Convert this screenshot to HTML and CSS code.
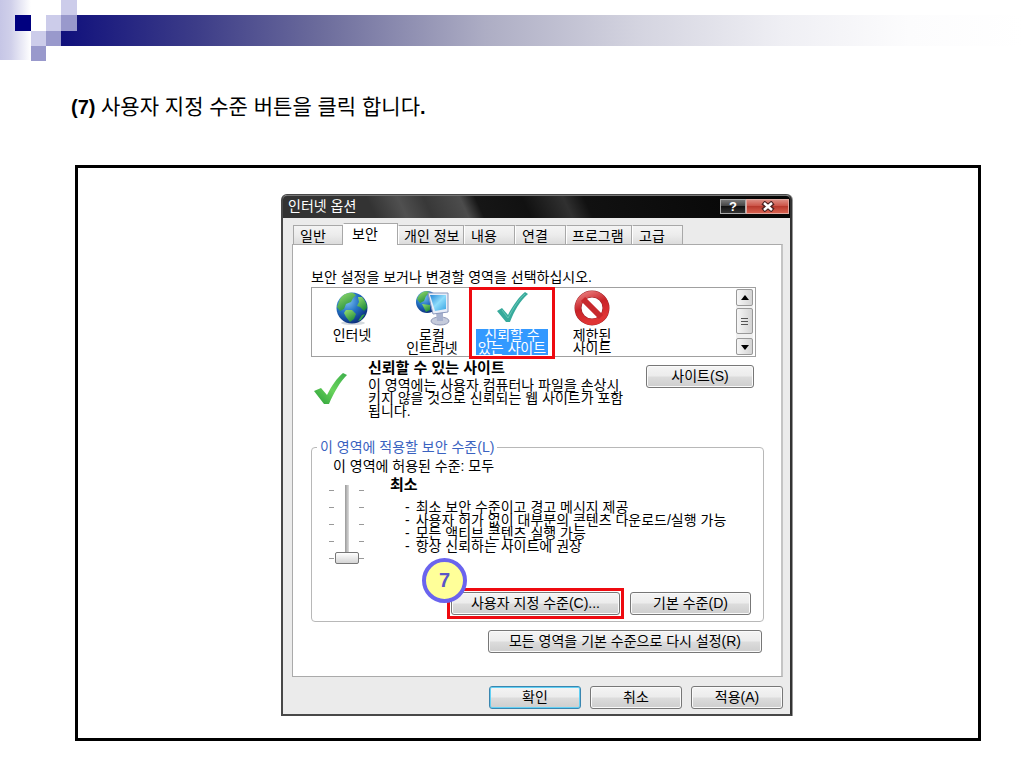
FILE: index.html
```html
<!DOCTYPE html>
<html lang="ko">
<head>
  <meta charset="UTF-8" />
  <meta name="viewport" content="width=device-width, initial-scale=1.0" />
  <title>인터넷 옵션</title>
  <link rel="stylesheet" href="styles.css">
</head>
<body>
  <header class="banner">
    <svg class="squares" width="77" height="61" viewBox="0 0 77 61" shape-rendering="crispEdges">
      <defs>
        <linearGradient id="fade">
          <stop offset="0" stop-color="#c6c6e6" />
          <stop offset="0.35" stop-color="#d0d0ea" />
          <stop offset="1" stop-color="#ffffff" />
        </linearGradient>
      </defs>
      <rect x="0" y="0" width="31" height="60" fill="url(#fade)" />
      <rect x="15" y="15" width="16" height="16" fill="#00007f" />
      <rect x="61" y="0" width="16" height="15" fill="#ccccea" />
      <rect x="46" y="15" width="15" height="16" fill="#ccccea" />
      <rect x="31" y="31" width="15" height="15" fill="#ccccea" />
      <rect x="61" y="15" width="16" height="16" fill="#9999cc" />
      <rect x="46" y="31" width="15" height="15" fill="#9999cc" />
      <rect x="31" y="46" width="15" height="15" fill="#9999cc" />
    </svg>
  </header>

  <h1 class="step"><b>(7)</b> <span>사용자 지정 수준 버튼을 클릭 합니다</span><b>.</b></h1>

  <main class="frame">
    <section class="dialog">
      <div class="titlebar">
        <span>인터넷 옵션</span>
        <div class="window-buttons">
          <button class="help" aria-label="도움말">?</button>
          <button class="close" aria-label="닫기">
            <svg width="14" height="11" viewBox="0 0 14 11">
              <path d="M2 1.5 L12 9.5 M12 1.5 L2 9.5" stroke="#4a2020" stroke-width="5" />
              <path d="M3 2 L11 9 M11 2 L3 9" stroke="#fff" stroke-width="2.5" />
            </svg>
          </button>
        </div>
      </div>

      <!-- Tabs -->
      <nav class="tabs">
        <button class="tab">일반</button>
        <button class="tab active">보안</button>
        <button class="tab wide">개인 정보</button>
        <button class="tab">내용</button>
        <button class="tab">연결</button>
        <button class="tab wide">프로그램</button>
        <button class="tab">고급</button>
      </nav>

      <div class="panel">
        <p class="hint">보안 설정을 보거나 변경할 영역을 선택하십시오.</p>

        <!-- Zones -->
        <div class="zones">
          <button class="zone">
            <svg width="36" height="36" viewBox="0 0 36 36">
              <defs>
                <radialGradient id="sea" cx="0.35" cy="0.28" r="0.75">
                  <stop offset="0" stop-color="#7fc4f4" />
                  <stop offset="0.5" stop-color="#2472c4" />
                  <stop offset="1" stop-color="#0b2f7c" />
                </radialGradient>
                <linearGradient id="land" x2="0.6" y2="1">
                  <stop offset="0" stop-color="#9be070" />
                  <stop offset="1" stop-color="#1f8c3c" />
                </linearGradient>
              </defs>
              <ellipse cx="19" cy="33" rx="12" ry="2" fill="#d4d9de" />
              <circle cx="18" cy="18" r="15.500" fill="url(#sea)" />
              <path d="M6 9 C9 4 14 2 19 3 L22 5 L19 8 L17 12 L12 14 L10 19 L6 21 L3 17 Z" fill="url(#land)" />
              <path d="M24 7 L28 7 C31 10 33 14 33 18 L30 21 L26 17 L23 16 L25 12 Z" fill="url(#land)" />
              <path d="M12 20 L18 20 L22 24 L20 29 L16 32 L12 27 L10 23 Z" fill="url(#land)" />
              <path d="M28 25 L31 24 L27 30 L24 31 Z" fill="#36a64a" />
            </svg>
            <span>인터넷</span>
          </button>
          <button class="zone">
            <svg width="36" height="36" viewBox="0 0 36 36">
              <defs>
                <linearGradient id="screen" x2="1" y2="1">
                  <stop offset="0" stop-color="#2688d8" />
                  <stop offset="0.5" stop-color="#8edcfb" />
                  <stop offset="1" stop-color="#38a5e4" />
                </linearGradient>
              </defs>
              <circle cx="13" cy="12" r="11" fill="url(#sea)" />
              <path d="M3 9 C6 2 11 0 16 2 L12 6 L10 11 L6 13 Z" fill="url(#land)" />
              <path d="M8 14 L16 15 L16 20 L12 22 Z" fill="url(#land)" />
              <ellipse cx="26" cy="31" rx="9" ry="4" fill="#c5cbdc" stroke="#8e97b5" />
              <path d="M22 23 L29 22 L29 31 L23 31 Z" fill="#a8b2ce" />
              <path d="M14 3 L34 3 L34 22 L19 24 Z" fill="#e8edf8" stroke="#8a98bd" />
              <path d="M16 5 L32 5 L32 19 L21 21 Z" fill="url(#screen)" />
            </svg>
            <span>로컬<br>인트라넷</span>
          </button>
          <button class="zone selected">
            <svg width="36" height="36" viewBox="0 0 36 36">
              <path d="M3 21 L8 18 L14 25 C19 15 25 7 31 2 L34 4 C26 11 20 21 16 32 L12 32 Z" fill="#37aa9b" />
              <path d="M8 20 L14 28 C20 17 25 9 31 4" fill="none" stroke="#65c6b7" />
            </svg>
            <span>신뢰할 수<br>있는 사이트</span>
          </button>
          <button class="zone">
            <svg width="36" height="36" viewBox="0 0 36 36">
              <defs>
                <linearGradient id="stop" x2="0.4" y2="1">
                  <stop offset="0" stop-color="#e97b7b" />
                  <stop offset="0.5" stop-color="#c82328" />
                  <stop offset="1" stop-color="#df3434" />
                </linearGradient>
              </defs>
              <circle cx="18" cy="18" r="14" fill="#fff" stroke="#9d2328" stroke-width="7" />
              <circle cx="18" cy="18" r="14" fill="none" stroke="url(#stop)" stroke-width="6" />
              <path d="M9 9 L27 27" stroke="#c8282c" stroke-width="6" />
            </svg>
            <span>제한된<br>사이트</span>
          </button>

          <div class="scrollbar">
            <button aria-label="위로"><svg width="10" height="6" viewBox="0 0 10 6"><path d="M1 5 L5 0 L9 5 Z" /></svg></button>
            <div class="grip"><i></i><i></i><i></i></div>
            <button class="down" aria-label="아래로"><svg width="10" height="6" viewBox="0 0 10 6"><path d="M1 1 L5 6 L9 1 Z" /></svg></button>
          </div>
        </div>

        <!-- Selected zone -->
        <div class="zone-info">
          <svg class="check" width="34" height="36" viewBox="0 0 34 36">
            <defs>
              <linearGradient id="green" x1="1" x2="0" y2="1">
                <stop offset="0" stop-color="#3cae4b" />
                <stop offset="0.5" stop-color="#69d35c" />
                <stop offset="1" stop-color="#269b35" />
              </linearGradient>
            </defs>
            <path d="M0 20 L7 17 L13 24 C18 14 23 7 29 2 L33 4 C26 11 20 21 15 33 L10 33 Z" fill="url(#green)" />
          </svg>
          <div class="zone-text">
            <h2>신뢰할 수 있는 사이트</h2>
            <p>이 영역에는 사용자 컴퓨터나 파일을 손상시<br>키지 않을 것으로 신뢰되는 웹 사이트가 포함<br>됩니다.</p>
          </div>
          <button class="btn sites">사이트(S)</button>
        </div>

        <!-- Security level -->
        <fieldset class="level">
          <legend>이 영역에 적용할 보안 수준(L)</legend>
          <label class="allowed" for="levelSlider">이 영역에 허용된 수준: 모두</label>
          <div class="level-row">
            <div class="slider">
              <div class="ticks"><i></i><i></i><i></i><i></i><i></i></div>
              <input type="range" id="levelSlider" min="0" max="4" value="0">
              <div class="ticks"><i></i><i></i><i></i><i></i><i></i></div>
            </div>
            <div class="level-text">
              <h2>최소</h2>
              <ul>
                <li><span>-</span>최소 보안 수준이고 경고 메시지 제공</li>
                <li><span>-</span>사용자 허가 없이 대부분의 콘텐츠 다운로드/실행 가능</li>
                <li><span>-</span>모든 액티브 콘텐츠 실행 가능</li>
                <li><span>-</span>항상 신뢰하는 사이트에 권장</li>
              </ul>
            </div>
          </div>
          <div class="level-buttons">
            <div class="marked">
              <button class="btn custom">사용자 지정 수준(C)...</button>
              <span class="badge">7</span>
            </div>
            <button class="btn default">기본 수준(D)</button>
          </div>
        </fieldset>

        <button class="btn reset">모든 영역을 기본 수준으로 다시 설정(R)</button>
      </div>

      <div class="dialog-footer">
        <button class="btn ok">확인</button>
        <button class="btn">취소</button>
        <button class="btn">적용(A)</button>
      </div>
    </section>
  </main>
</body>
</html>
```

FILE: styles.css
```css
* {
  box-sizing: border-box;
}

body {
  margin: 0;
  background: #fff;
  color: #000;
  font-family: "Liberation Sans", "Noto Sans CJK KR", sans-serif;
  font-size: 14px;
  line-height: 13px;
}

h1, h2, p, ul {
  margin: 0;
  padding: 0;
}

button {
  margin: 0;
  padding: 0;
  font: inherit;
  color: inherit;
  white-space: nowrap;
}

svg {
  display: block;
  fill: none;
}

/* Header */
.banner {
  padding-left: 61px;
  background: linear-gradient(to right, #10107c, #3c3c88 14%, #6c6c9c 27%, #adadc4 44%, #d4d4e0 60%, #efeff4 75%, #fcfcfd 88%, #fff) content-box no-repeat 0 15px / 100% 31px;
}

.squares {
  margin-left: -61px;
}

.step {
  padding: 34px 71px 46px;
  font-size: 20px;
  line-height: 24px;
  font-weight: normal;
}

.step span {
  font-size: 21px;
}

/* Dialog */
.frame {
  display: flex;
  justify-content: center;
  margin: 0 43px 0 75px;
  padding: 26px 0 22px 17px;
  border: 3px solid #000;
}

.dialog {
  width: 100%;
  max-width: 511px;
  padding-bottom: 5px;
  background: #ebebeb;
  border: 2px solid #484848;
  border-top-width: 1px;
  border-right: 2px solid #333;
  border-radius: 6px 6px 0 0;
  box-shadow: 1px 0 #999;
}

.titlebar {
  display: flex;
  justify-content: space-between;
  align-items: center;
  height: 23px;
  padding: 0 1px 1px 5px;
  border-radius: 4px 4px 0 0;
  border-top: 1px solid #777;
  background: linear-gradient(65deg, #333 0 18%, #505050 24%, #383838 29%, #4c4c4c 36%, #161616 39%, #111 48%, #303030 56%, #111 60%, #050505 100%);
  color: #fff;
}

.window-buttons {
  display: flex;
}

.help,
.close {
  display: flex;
  justify-content: center;
  align-items: center;
  width: 26px;
  height: 15px;
  border: 1px solid #aaa;
  background: linear-gradient(#777, #444 45%, #111 50%, #333);
  color: #fff;
  font-size: 13px;
  font-weight: bold;
}

.close {
  width: 43px;
  border-color: #e0a8a0;
  background: linear-gradient(#dc8a80, #cc5448 45%, #b83a2e 50%, #d8604e);
}

/* Tabs */
.tabs {
  display: flex;
  align-items: flex-end;
  padding: 5px 0 0 10px;
}

.tab {
  width: 51px;
  height: 19px;
  padding: 2px 0 0 6px;
  border: 1px solid #a8a8a8;
  border-left-color: #fff;
  border-bottom: 0;
  background: linear-gradient(#f4f4f4, #ececec 50%, #dcdcdc);
  text-align: left;
}

.tab:first-child {
  width: 50px;
  border-left-color: #a8a8a8;
}

.tab.wide {
  width: 66px;
  padding-left: 5px;
}

.tab.active {
  position: relative;
  width: 55px;
  height: 22px;
  margin-bottom: -1px;
  padding: 0 0 1px 8px;
  background: #fff;
}

.panel {
  margin: 0 7px 0 9px;
  padding: 26px 17px 23px 18px;
  background: #fff;
  border: 1px solid #aaa;
  border-right: 2px solid #c4c4c4;
}

/* Zones */
.zones {
  display: flex;
  max-width: 445px;
  height: 70px;
  margin-top: 3px;
  border: 1px solid #a0a0a0;
}

.zone {
  display: flex;
  flex-direction: column;
  align-items: center;
  width: 80px;
  margin-top: 2px;
  border: 0;
  background: none;
}

.zone span {
  margin-top: 3px;
}

.zone.selected {
  outline: 3px solid #ee0a10;
}

.zone.selected span {
  padding: 0 2px;
  background: #3399ff;
  color: #fff;
}

.scrollbar {
  display: flex;
  flex-direction: column;
  gap: 2px;
  margin: 1px 2px 1px auto;
  width: 17px;
  background: #f0f0f0;
}

.scrollbar button,
.grip {
  display: flex;
  flex-direction: column;
  justify-content: center;
  align-items: center;
  height: 17px;
  border: 1px solid #999;
  border-radius: 2px;
  background: linear-gradient(to right, #f6f6f6, #d4d4d4);
}

.scrollbar path {
  fill: #000;
}

.grip {
  gap: 2px;
  height: 26px;
}

.grip i {
  width: 7px;
  height: 1px;
  background: #555;
}

.scrollbar .down {
  margin-top: auto;
}

/* Selected zone */
.zone-info {
  display: flex;
  align-items: flex-start;
  padding-left: 3px;
  height: 83px;
}

.check {
  margin: 14px 20px 0 0;
}

.zone-text h2,
.level-text h2 {
  font-size: 15px;
  line-height: 15px;
}

.zone-text h2 {
  margin: 3px 0 4px;
}

.btn {
  height: 23px;
  border: 1px solid #777;
  border-radius: 3px;
  background: linear-gradient(#f4f4f4, #ececec 48%, #dcdcdc 52%, #cecece);
  box-shadow: inset 0 0 0 1px #fafafa;
}

.sites {
  width: 108px;
  margin: 8px 10px 0 auto;
}

/* Security level */
.level {
  margin: 0;
  padding: 5px 12px 6px 17px;
  border: 1px solid #b8b8b8;
  border-radius: 4px;
}

.level legend {
  margin-left: -12px;
  padding: 0 3px;
  color: #3a62c0;
  line-height: 14px;
}

.allowed {
  display: block;
  padding-left: 4px;
  line-height: 14px;
}

.level-row {
  display: flex;
  gap: 26px;
  height: 119px;
  padding-top: 4px;
}

.slider {
  display: flex;
  width: 35px;
  height: 79px;
  margin-top: 8px;
}

.ticks {
  display: flex;
  flex-direction: column;
  justify-content: space-between;
  padding: 5px 0;
}

.ticks i {
  width: 5px;
  height: 1px;
  background: #999;
}

.slider input {
  appearance: none;
  writing-mode: vertical-lr;
  direction: rtl;
  width: 25px;
  height: 79px;
  margin: 0;
  background: linear-gradient(to right, #999, #ddd) no-repeat center top / 4px 72px;
}

.slider input::-webkit-slider-thumb {
  appearance: none;
  width: 24px;
  height: 12px;
  border: 1px solid #777;
  border-radius: 2px;
  background: linear-gradient(#fff, #d4d4d4);
}

.level-text ul {
  margin-top: 9px;
  padding-left: 15px;
  list-style: none;
  white-space: nowrap;
}

.level-text li {
  display: flex;
  gap: 6px;
}

.level-buttons {
  display: flex;
  justify-content: flex-end;
  gap: 10px;
}

/* red marker around the button to click */
.marked {
  position: relative;
  margin: -4px;
  padding: 1px;
  border: 3px solid #ee0a10;
}

.custom {
  display: block;
  width: 169px;
}

.default {
  width: 121px;
}

.badge {
  position: absolute;
  left: -28px;
  top: -33px;
  width: 45px;
  height: 45px;
  border: 4px solid #6a64ee;
  border-radius: 50%;
  background: #ffff99;
  color: #5a55c8;
  font-size: 20px;
  font-weight: bold;
  line-height: 37px;
  text-align: center;
}

.reset {
  display: block;
  width: 274px;
  margin: 8px 2px 0 auto;
}

.dialog-footer {
  display: flex;
  justify-content: flex-end;
  gap: 9px;
  padding: 9px 7px 0 0;
}

.dialog-footer .btn {
  width: 92px;
}

.dialog-footer .ok {
  border-color: #3a86b0;
  box-shadow: inset 0 0 0 1px #62d0f4;
}
```
